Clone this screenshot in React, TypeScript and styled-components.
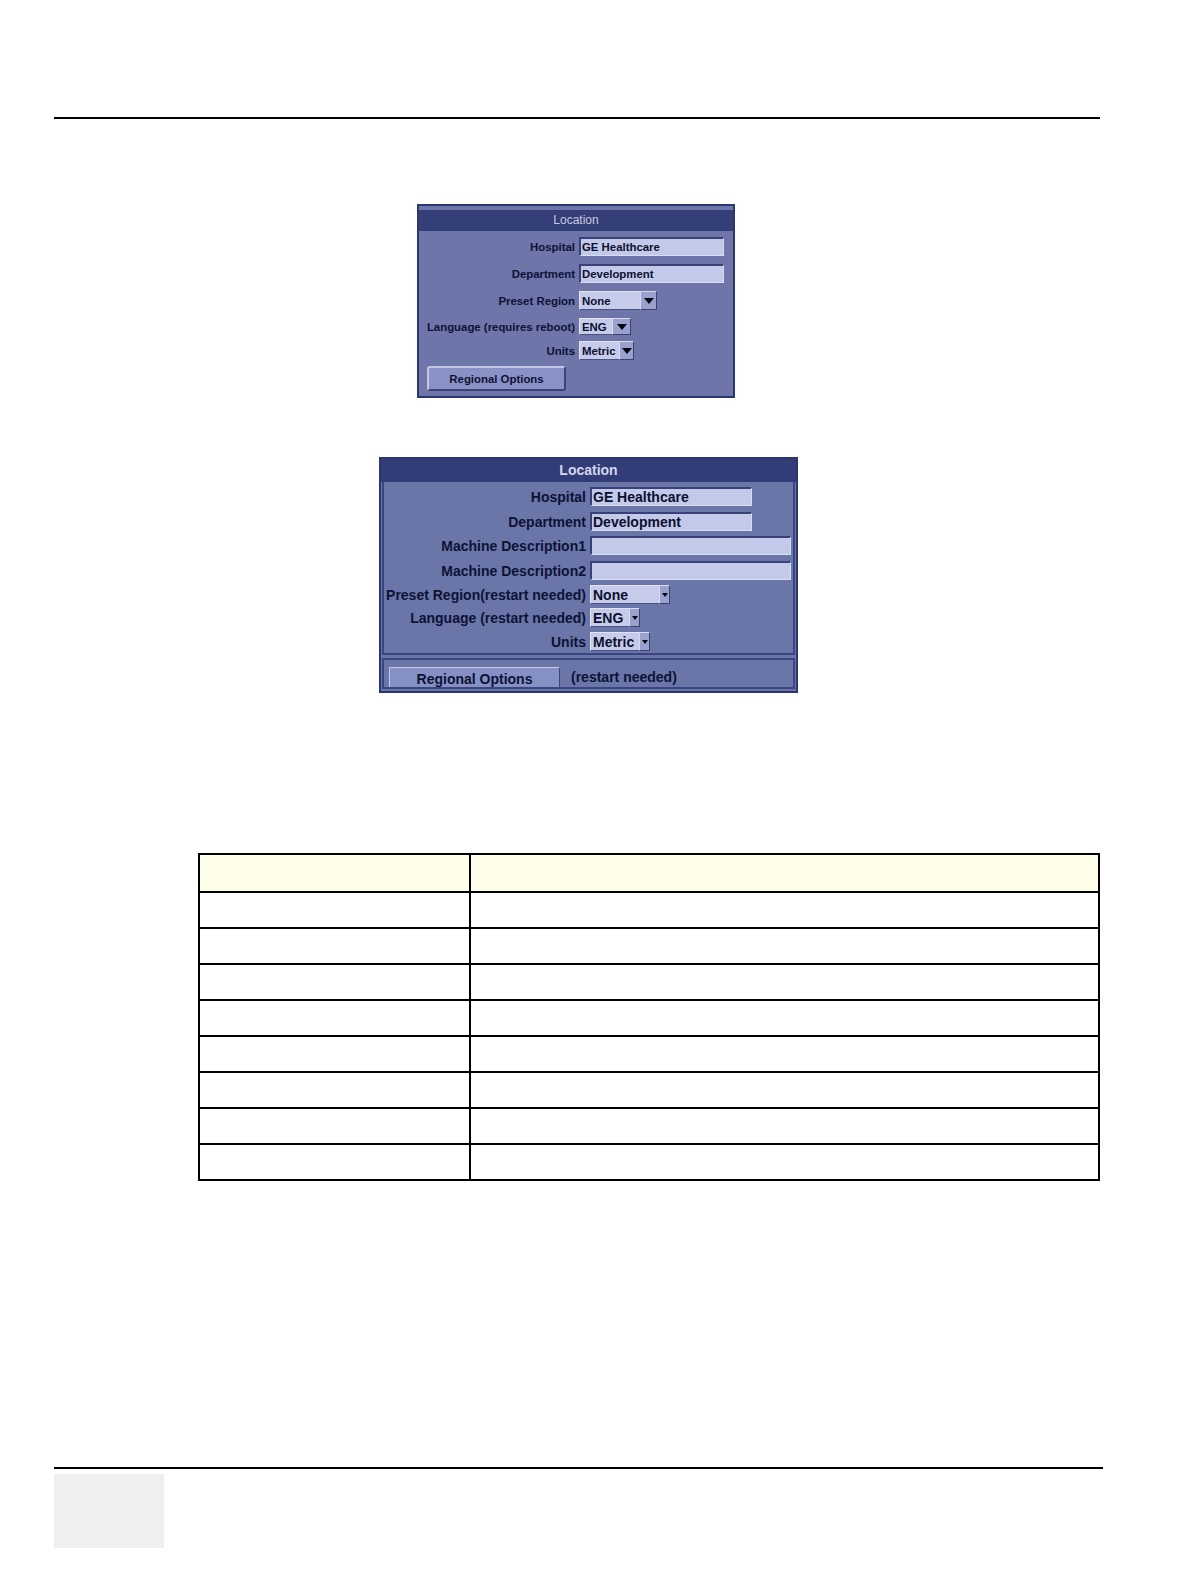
import styled, { createGlobalStyle } from 'styled-components'

const GlobalStyle = createGlobalStyle`
  body {
    margin: 0;
    background: #ffffff;
    font-family: "Liberation Sans", Arial, sans-serif;
  }
`

const Page = styled.div`
  width: 1190px;
  min-height: 1584px;
  padding-top: 117px;
  box-sizing: border-box;
  display: flex;
  flex-direction: column;
  align-items: flex-start;
`

const Rule = styled.div<{ $width: number; $top?: number }>`
  height: 2px;
  background: #000000;
  margin-left: 54px;
  margin-top: ${(p) => p.$top ?? 0}px;
  width: ${(p) => p.$width}px;
`

/* ---------- shared widget parts ---------- */

type Size = 'sm' | 'lg'

const FieldRow = styled.div<{ $h: number; $mt: number }>`
  display: flex;
  align-items: center;
  height: ${(p) => p.$h}px;
  margin-top: ${(p) => p.$mt}px;
`

const Label = styled.div<{ $size: Size }>`
  width: ${(p) => (p.$size === 'sm' ? 156 : 202)}px;
  margin-right: 4px;
  text-align: right;
  white-space: nowrap;
  font-weight: bold;
  font-size: ${(p) => (p.$size === 'sm' ? '11.4px' : '14px')};
  color: #0c1236;
`

const TextBox = styled.div<{ $w: number; $size: Size }>`
  width: ${(p) => p.$w}px;
  height: 100%;
  box-sizing: border-box;
  display: flex;
  align-items: center;
  padding-left: 1px;
  background: #c3c9e8;
  border-top: 2px solid #384177;
  border-left: 2px solid #384177;
  border-right: 1px solid #d8dcf0;
  border-bottom: 1px solid #d8dcf0;
  font-weight: bold;
  font-size: ${(p) => (p.$size === 'sm' ? '11.4px' : '14px')};
  color: #0b1030;
  white-space: nowrap;
`

const Select = styled.div<{ $w: number }>`
  display: flex;
  width: ${(p) => p.$w}px;
  height: 100%;
`

const SelectValue = styled.div<{ $size: Size }>`
  flex: 1;
  box-sizing: border-box;
  display: flex;
  align-items: center;
  padding-left: 2px;
  background: #c6cbe9;
  border-top: 1px solid #e2e5f5;
  border-left: 1px solid #e2e5f5;
  border-bottom: 1px solid #4a5282;
  font-weight: bold;
  font-size: ${(p) => (p.$size === 'sm' ? '11.4px' : '14px')};
  color: #0b1030;
`

const SelectArrow = styled.div<{ $w: number; $size: Size }>`
  width: ${(p) => p.$w}px;
  box-sizing: border-box;
  display: flex;
  align-items: center;
  justify-content: center;
  background: #9aa1cd;
  border-top: 1px solid #d6daf0;
  border-left: 1px solid #d6daf0;
  border-right: 1px solid #3a4272;
  border-bottom: 1px solid #3a4272;

  &::after {
    content: '';
    border-left: ${(p) => (p.$size === 'sm' ? 5 : 3)}px solid transparent;
    border-right: ${(p) => (p.$size === 'sm' ? 5 : 3)}px solid transparent;
    border-top: ${(p) => (p.$size === 'sm' ? 6 : 4)}px solid #05070f;
  }
`

/* ---------- first panel ---------- */

const PanelSmall = styled.div`
  margin: 85px 0 0 417px;
  width: 318px;
  height: 194px;
  box-sizing: border-box;
  border: 2px solid #2c366f;
  background: #6d75a9;
  display: flex;
  flex-direction: column;
`

const TitleSmall = styled.div`
  margin-top: 4px;
  height: 21px;
  line-height: 21px;
  background: #343e77;
  color: #c6cbe4;
  font-size: 12px;
  text-align: center;
`

const FormSmall = styled.div`
  padding-top: 6px;
`

const ButtonSmall = styled.div`
  margin: 6px 0 0 8px;
  width: 139px;
  height: 25px;
  box-sizing: border-box;
  display: flex;
  align-items: center;
  justify-content: center;
  background: #8a92c5;
  border: 2px solid;
  border-color: #c2c7e5 #3b4372 #3b4372 #c2c7e5;
  border-radius: 3px;
  font-size: 11.4px;
  font-weight: bold;
  color: #0c1236;
`

/* ---------- second panel ---------- */

const PanelLarge = styled.div`
  margin: 59px 0 0 379px;
  width: 419px;
  height: 236px;
  box-sizing: border-box;
  border: 2px solid #2b356e;
  padding-bottom: 2px;
  background: #6a76a8;
  display: flex;
  flex-direction: column;
`

const TitleLarge = styled.div`
  height: 23px;
  line-height: 23px;
  background: #323c76;
  color: #d2d6ee;
  font-size: 14px;
  font-weight: bold;
  text-align: center;
`

const Section = styled.div`
  margin: 0 1px;
  padding: 5px 0 2px 0;
  border: 2px solid #3b4680;
  border-top: none;
`

const LowerSection = styled.div`
  margin: 3px 1px 0;
  height: 31px;
  box-sizing: border-box;
  border: 2px solid #3b4680;
  padding: 7px 0 0 5px;
  overflow: hidden;
  display: flex;
  align-items: flex-start;
`

const ButtonLarge = styled.div`
  flex: none;
  width: 171px;
  height: 24px;
  box-sizing: border-box;
  line-height: 22px;
  text-align: center;
  background: #8590c4;
  border-top: 1px solid #c3c8e6;
  border-left: 1px solid #c3c8e6;
  border-right: 1px solid #3d4575;
  font-size: 14px;
  font-weight: bold;
  color: #0c1236;
`

const Note = styled.div`
  margin-left: 11px;
  line-height: 20px;
  font-size: 14px;
  font-weight: bold;
  color: #0c1236;
`

/* ---------- table ---------- */

const Table = styled.table`
  margin: 160px 0 0 198px;
  width: 902px;
  border-collapse: collapse;
  table-layout: fixed;
`

const Row = styled.tr<{ $head?: boolean }>`
  height: ${(p) => (p.$head ? 38 : 36)}px;
  background: ${(p) => (p.$head ? '#fffee8' : '#ffffff')};
`

const Cell = styled.td`
  border: 2px solid #000000;
  padding: 0;
`

const FooterBox = styled.div`
  margin: 5px 0 0 54px;
  width: 110px;
  height: 74px;
  background: #efefef;
`

const bodyRows = [0, 1, 2, 3, 4, 5, 6, 7]

export default function App() {
  return (
    <>
      <GlobalStyle />
      <Page>
        <Rule $width={1046} />

        <PanelSmall>
          <TitleSmall>Location</TitleSmall>
          <FormSmall>
            <FieldRow $h={19} $mt={0}>
              <Label $size="sm">Hospital</Label>
              <TextBox $w={145} $size="sm">GE Healthcare</TextBox>
            </FieldRow>
            <FieldRow $h={19} $mt={8}>
              <Label $size="sm">Department</Label>
              <TextBox $w={145} $size="sm">Development</TextBox>
            </FieldRow>
            <FieldRow $h={19} $mt={8}>
              <Label $size="sm">Preset Region</Label>
              <Select $w={78}>
                <SelectValue $size="sm">None</SelectValue>
                <SelectArrow $w={17} $size="sm" />
              </Select>
            </FieldRow>
            <FieldRow $h={17} $mt={8}>
              <Label $size="sm">Language (requires reboot)</Label>
              <Select $w={52}>
                <SelectValue $size="sm">ENG</SelectValue>
                <SelectArrow $w={19} $size="sm" />
              </Select>
            </FieldRow>
            <FieldRow $h={19} $mt={6}>
              <Label $size="sm">Units</Label>
              <Select $w={55}>
                <SelectValue $size="sm">Metric</SelectValue>
                <SelectArrow $w={15} $size="sm" />
              </Select>
            </FieldRow>
          </FormSmall>
          <ButtonSmall>Regional Options</ButtonSmall>
        </PanelSmall>

        <PanelLarge>
          <TitleLarge>Location</TitleLarge>
          <Section>
            <FieldRow $h={19} $mt={0}>
              <Label $size="lg">Hospital</Label>
              <TextBox $w={162} $size="lg">GE Healthcare</TextBox>
            </FieldRow>
            <FieldRow $h={19} $mt={6}>
              <Label $size="lg">Department</Label>
              <TextBox $w={162} $size="lg">Development</TextBox>
            </FieldRow>
            <FieldRow $h={19} $mt={5}>
              <Label $size="lg">Machine Description1</Label>
              <TextBox $w={201} $size="lg" />
            </FieldRow>
            <FieldRow $h={19} $mt={6}>
              <Label $size="lg">Machine Description2</Label>
              <TextBox $w={201} $size="lg" />
            </FieldRow>
            <FieldRow $h={19} $mt={5}>
              <Label $size="lg">Preset Region(restart needed)</Label>
              <Select $w={80}>
                <SelectValue $size="lg">None</SelectValue>
                <SelectArrow $w={11} $size="lg" />
              </Select>
            </FieldRow>
            <FieldRow $h={19} $mt={4}>
              <Label $size="lg">Language (restart needed)</Label>
              <Select $w={50}>
                <SelectValue $size="lg">ENG</SelectValue>
                <SelectArrow $w={11} $size="lg" />
              </Select>
            </FieldRow>
            <FieldRow $h={19} $mt={5}>
              <Label $size="lg">Units</Label>
              <Select $w={60}>
                <SelectValue $size="lg">Metric</SelectValue>
                <SelectArrow $w={11} $size="lg" />
              </Select>
            </FieldRow>
          </Section>
          <LowerSection>
            <ButtonLarge>Regional Options</ButtonLarge>
            <Note>(restart needed)</Note>
          </LowerSection>
        </PanelLarge>

        <Table>
          <colgroup>
            <col style={{ width: 271 }} />
            <col />
          </colgroup>
          <tbody>
            <Row $head>
              <Cell />
              <Cell />
            </Row>
            {bodyRows.map((i) => (
              <Row key={i}>
                <Cell />
                <Cell />
              </Row>
            ))}
          </tbody>
        </Table>

        <Rule $width={1049} $top={286} />
        <FooterBox />
      </Page>
    </>
  )
}
